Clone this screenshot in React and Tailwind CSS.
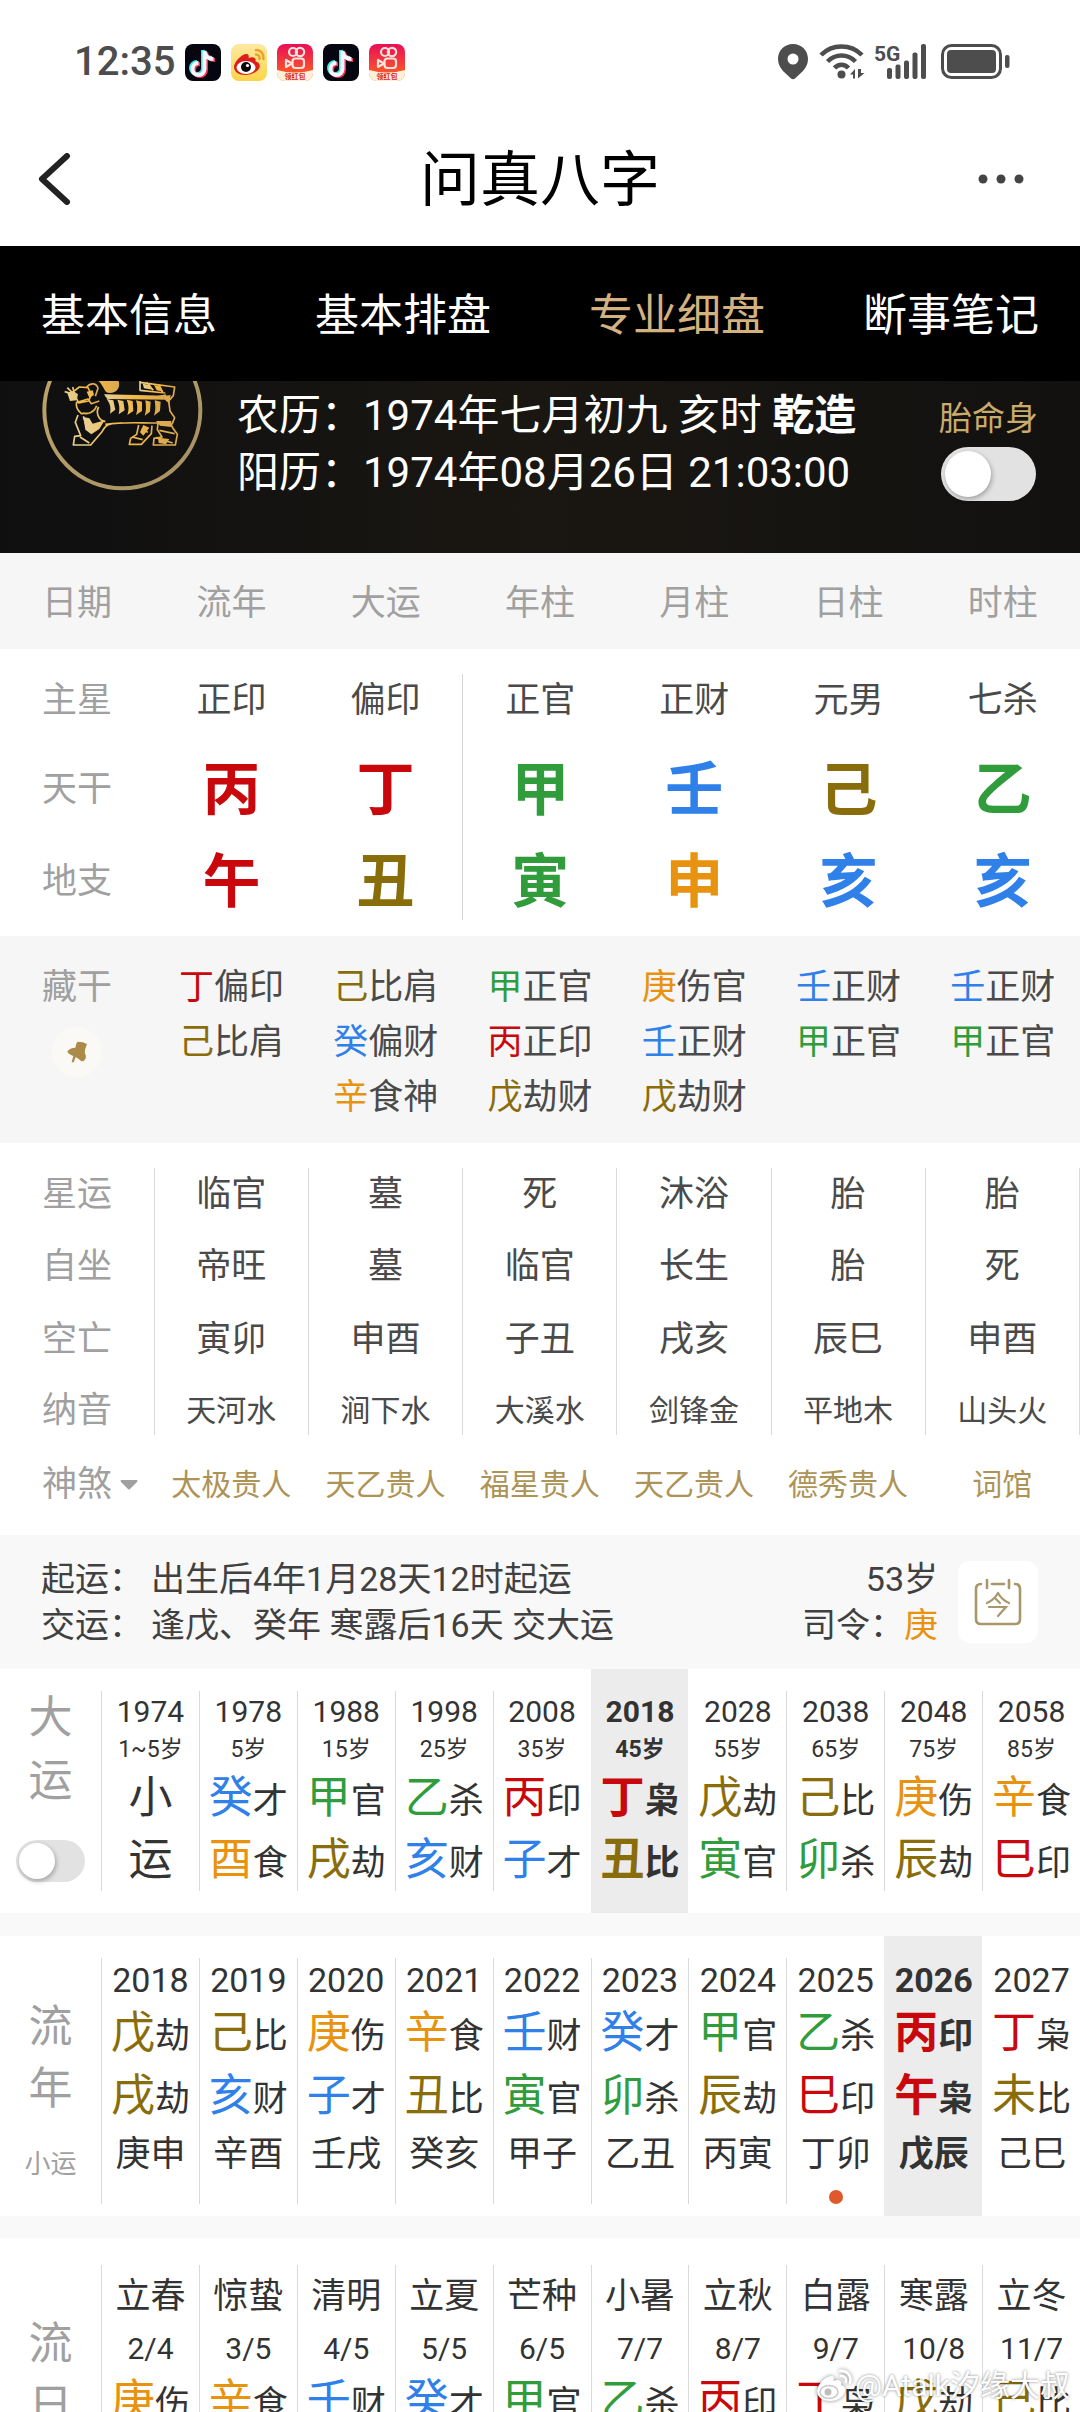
import { useState } from "react";
import clsx from "clsx";

const RED = "text-[#c8080c]";
const BROWN = "text-[#8a6d0b]";
const GREEN = "text-[#319c3c]";
const BLUE = "text-[#2f80e8]";
const ORANGE = "text-[#e8930f]";

// five-element colour of every stem and branch
const elementColor = {
  甲: GREEN, 乙: GREEN, 寅: GREEN, 卯: GREEN,
  丙: RED, 丁: RED, 巳: RED, 午: RED,
  戊: BROWN, 己: BROWN, 辰: BROWN, 戌: BROWN, 丑: BROWN, 未: BROWN,
  庚: ORANGE, 辛: ORANGE, 申: ORANGE, 酉: ORANGE,
  壬: BLUE, 癸: BLUE, 子: BLUE, 亥: BLUE,
};

const tabs = ["基本信息", "基本排盘", "专业细盘", "断事笔记"];

const hiddenStems = [
  ["丁偏印", "己比肩"],
  ["己比肩", "癸偏财", "辛食神"],
  ["甲正官", "丙正印", "戊劫财"],
  ["庚伤官", "壬正财", "戊劫财"],
  ["壬正财", "甲正官"],
  ["壬正财", "甲正官"],
];

const fortunes = [
  { label: "星运", values: ["临官", "墓", "死", "沐浴", "胎", "胎"], height: "h-[61px] pb-2" },
  { label: "自坐", values: ["帝旺", "墓", "临官", "长生", "胎", "死"], height: "h-[73px] pt-0.5" },
  { label: "空亡", values: ["寅卯", "申酉", "子丑", "戌亥", "辰巳", "申酉"], height: "h-[73px] pt-0.5" },
  { label: "纳音", values: ["天河水", "涧下水", "大溪水", "剑锋金", "平地木", "山头火"], height: "h-[60px] pt-3", small: true },
];

const spirits = ["太极贵人", "天乙贵人", "福星贵人", "天乙贵人", "德秀贵人", "词馆"];

const decades = [
  { year: "1974", age: "1~5岁", plain: ["小", "运"] },
  { year: "1978", age: "5岁", rows: ["癸才", "酉食"] },
  { year: "1988", age: "15岁", rows: ["甲官", "戌劫"] },
  { year: "1998", age: "25岁", rows: ["乙杀", "亥财"] },
  { year: "2008", age: "35岁", rows: ["丙印", "子才"] },
  { year: "2018", age: "45岁", rows: ["丁枭", "丑比"] },
  { year: "2028", age: "55岁", rows: ["戊劫", "寅官"] },
  { year: "2038", age: "65岁", rows: ["己比", "卯杀"] },
  { year: "2048", age: "75岁", rows: ["庚伤", "辰劫"] },
  { year: "2058", age: "85岁", rows: ["辛食", "巳印"] },
];

const years = [
  { year: "2018", rows: ["戊劫", "戌劫"], minor: "庚申" },
  { year: "2019", rows: ["己比", "亥财"], minor: "辛酉" },
  { year: "2020", rows: ["庚伤", "子才"], minor: "壬戌" },
  { year: "2021", rows: ["辛食", "丑比"], minor: "癸亥" },
  { year: "2022", rows: ["壬财", "寅官"], minor: "甲子" },
  { year: "2023", rows: ["癸才", "卯杀"], minor: "乙丑" },
  { year: "2024", rows: ["甲官", "辰劫"], minor: "丙寅" },
  { year: "2025", rows: ["乙杀", "巳印"], minor: "丁卯", now: true },
  { year: "2026", rows: ["丙印", "午枭"], minor: "戊辰" },
  { year: "2027", rows: ["丁枭", "未比"], minor: "己巳" },
];

const terms = [
  { name: "立春", date: "2/4", row: "庚伤" },
  { name: "惊蛰", date: "3/5", row: "辛食" },
  { name: "清明", date: "4/5", row: "壬财" },
  { name: "立夏", date: "5/5", row: "癸才" },
  { name: "芒种", date: "6/5", row: "甲官" },
  { name: "小暑", date: "7/7", row: "乙杀" },
  { name: "立秋", date: "8/7", row: "丙印" },
  { name: "白露", date: "9/7", row: "丁枭" },
  { name: "寒露", date: "10/8", row: "戊劫" },
  { name: "立冬", date: "11/7", row: "己比" },
];

function TiktokIcon() {
  const note = "M20 5v18a6 6 0 1 1-6-6M20 5c.5 5 4 8 9 8";
  return (
    <svg viewBox="0 0 36 37" className="w-9 h-[37px]" aria-label="抖音">
      <rect width="36" height="37" rx="8" fill="#05060f" />
      <g fill="none" strokeWidth="4">
        <path d={note} stroke="#3be5e6" transform="translate(-2 1)" />
        <path d={note} stroke="#f4325c" transform="translate(1 3)" />
        <path d={note} stroke="#f4f6fa" transform="translate(-.5 2)" />
      </g>
    </svg>
  );
}

function WeiboIcon() {
  return (
    <svg viewBox="0 0 36 37" className="w-9 h-[37px]" aria-label="微博">
      <defs>
        <linearGradient id="weiboBg" x1="0" y1="0" x2="0" y2="1">
          <stop offset="0" stopColor="#fde9a2" />
          <stop offset="1" stopColor="#fbd548" />
        </linearGradient>
      </defs>
      <rect width="36" height="37" rx="8" fill="url(#weiboBg)" />
      <path
        d="M3 23c0-6 9-14 13-13 2 .5 2 3 1.500 4 4-1.500 8-1 7 3.500 3 .5 5 3 4 6C27 28 20 31 14 31 8 31 3 28 3 23z"
        fill="#dd1f1b"
      />
      <ellipse cx="15" cy="23.500" rx="9.500" ry="6.500" fill="#fff" />
      <circle cx="15" cy="23" r="5" fill="#0a0a0a" />
      <circle cx="16.500" cy="21.500" r="1.600" fill="#fff" />
      <path
        d="M25 6c5 0 8 4 7.500 9M25 10.500c2.500 0 4 2 3.500 4.500"
        fill="none"
        stroke="#e9a32b"
        strokeWidth="2.400"
        strokeLinecap="round"
      />
    </svg>
  );
}

function KuaishouIcon() {
  return (
    <svg viewBox="0 0 36 37" className="w-9 h-[37px]" aria-label="快手">
      <defs>
        <linearGradient id="ksBg" x1="0" y1="0" x2="0" y2="1">
          <stop offset="0" stopColor="#e80f57" />
          <stop offset="1" stopColor="#ff6a1c" />
        </linearGradient>
        <clipPath id="ksClip">
          <rect width="36" height="37" rx="8" />
        </clipPath>
      </defs>
      <g clipPath="url(#ksClip)">
        <rect width="36" height="37" fill="url(#ksBg)" />
        <path d="M0 26q18 5 36 0v11H0z" fill="#fff0d8" />
        <g fill="none" stroke="#ffe3da" strokeWidth="2.200">
          <circle cx="16" cy="8" r="4" />
          <circle cx="23" cy="8" r="4.200" />
          <rect x="15.500" y="14.500" width="11.500" height="9.500" rx="3" />
          <path d="M15 19.500l-6-3.500v7z" strokeLinejoin="round" />
        </g>
      </g>
      <text x="18" y="35" textAnchor="middle" fontSize="7" fontWeight="700" fill="#d9261c">
        领红包
      </text>
    </svg>
  );
}

function StatusIcons() {
  return (
    <svg viewBox="0 0 232 36" className="w-[232px] h-9 overflow-visible" fill="#4d4d4d" aria-label="5G 信号，电量满">
      <path d="M15 0C6.500 0 0 6.500 0 15c0 5 2 8 5 12l8 7.500q2 1.500 4 0l8-7.500c3-4 5-7 5-12C30 6.500 23.500 0 15 0zm0 9.500a5.500 5.500 0 1 1 0 11 5.500 5.500 0 0 1 0-11z" fillRule="evenodd" />
      <g fill="none" stroke="#4d4d4d" strokeWidth="4.500">
        <path d="M43 11c11-11.500 30-11.500 41 0" />
        <path d="M49.500 17.500c8-8 20-8 28 0" />
        <path d="M56.500 24c4-4.500 10-4.500 14 0" />
      </g>
      <circle cx="63.500" cy="30.500" r="4" />
      <path d="M77 34.500V25l-5 5.500h3v4zM80 25v9.500l6.500-5.500H83v-4z" />
      <text x="96" y="17" fontSize="21" fontWeight="700">
        5G
      </text>
      <rect x="109" y="24" width="5" height="11" rx="2" />
      <rect x="117.500" y="20.500" width="5" height="14.500" rx="2" />
      <rect x="126" y="16.500" width="5" height="18.500" rx="2" />
      <rect x="134.500" y="8.500" width="5" height="26.500" rx="2" />
      <rect x="143" y="0" width="5" height="35" rx="2" />
      <rect x="164.500" y="1.500" width="58" height="32" rx="9" fill="none" stroke="#4d4d4d" strokeWidth="3" />
      <rect x="169" y="6" width="49" height="23" rx="4" />
      <rect x="227" y="11" width="4.500" height="13" rx="2" />
    </svg>
  );
}

function TigerBadge() {
  return (
    <svg viewBox="33 18 486 330" className="w-[162px] h-[110px] shrink-0" aria-label="生肖虎">
      <defs>
        <linearGradient id="ring" x1="0" y1="0" x2="1" y2="1">
          <stop offset="0" stopColor="#c0a76a" />
          <stop offset="1" stopColor="#a39064" />
        </linearGradient>
        <linearGradient id="tiger" x1="0" y1="0" x2="1" y2="0">
          <stop offset="0" stopColor="#e6cf94" />
          <stop offset=".5" stopColor="#f3b844" />
          <stop offset="1" stopColor="#d9a850" />
        </linearGradient>
      </defs>
      <circle cx="277" cy="106" r="234" fill="none" stroke="url(#ring)" strokeWidth="12" />
      <g fill="none" stroke="url(#tiger)" strokeWidth="5" strokeLinejoin="round">
        {/* whiskers and muzzle */}
        <path d="M130 50l18-14 26 2 10 20-8 20-30 6zM140 80c-4 16 2 26 14 36l24-2M170 36c12-14 30-12 34 4l-8 24M112 38l14 14M104 50l20 6M128 36l4 14M142 82l32-10 10 14 24-8M200 92c-6 18-24 28-42 22" />
        {/* back, belly and legs */}
        <path d="M226 62l154 4 28-6M206 96c-8 14-4 40 20 44M226 148c50-8 100-4 158-4M144 120l-8 22 16 40-18 2-4 26h52l34-40c8-14 12-20 30-24l30-2M326 150l-6 28-18 12-4 18h36l30-32 2-24M384 142l-2 22 14 22-24 4-2 20h66l6-32-14-20-10-20" />
        {/* tail */}
        <path d="M330 18v28l76 8M330 22l104 14-4 26-14 16 4 30 14 20-8 20M350 22l20 24M384 28l14 24" />
        <path d="M160 124l12 40M150 186l28 18M306 186l32 8M334 164l20 8M378 188l50 16M388 166l46 10" />
      </g>
      <g fill="url(#tiger)">
        <path d="M112 54l18-6 14 10-4 18-20 2zM170 50l18-4 4 14-14 8zM206 18h60c6 20-6 36-26 36-18 0-14-14-34-36z" />
        <path d="M160 126l18 4 10 16 36-10-16 26-24 16-18-14zM378 138h46v18l-34-4zM340 150l18 8-18 24-10-10zM384 188l34 4-10 16-22-4z" />
        <path d="M222 58l190 4v12l-180-2z" />
        <path d="M230 72l20 4 6 28-16 12c4-18 0-30-10-44zM262 74l18 4 4 28-18 12c4-18 2-30-4-44zM290 74l18 4 2 30-18 12c6-18 4-30-2-46zM318 76l18 4v28l-18 12c6-18 4-30 0-44zM346 76l16 4-2 30-16 12c6-18 4-30 2-46zM374 76l18 4-2 28-18 14c6-18 4-30 2-46z" />
        <path d="M338 26l22 4 8 14-26-4zM372 30l20 4 8 16-20-4zM408 62l14-2-4 26-12-10z" />
      </g>
    </svg>
  );
}

function Toggle({ label, small }) {
  const [on, setOn] = useState(false);
  return (
    <button
      role="switch"
      aria-checked={on}
      aria-label={label}
      onClick={() => setOn(!on)}
      className={clsx(
        "flex items-center rounded-full bg-[#e2e2e2]",
        small ? "w-[69px] h-[42px] px-[3px]" : "w-[95px] h-[54px] px-1",
        on && "justify-end"
      )}
    >
      <span
        className={clsx(
          "rounded-full bg-white shadow-[1px_2px_5px_rgba(0,0,0,0.3)]",
          small ? "size-9" : "size-[46px]"
        )}
      />
    </button>
  );
}

function Pair({ text, line }) {
  return (
    <span className={clsx("block whitespace-nowrap text-[44px]", line)}>
      <span className={elementColor[text[0]]}>{text[0]}</span>
      <span className="text-[35px] leading-none">{text[1]}</span>
    </span>
  );
}

function LabelCell({ children, className }) {
  return (
    <th scope="row" className={clsx("font-normal text-[#a0a0a0] pl-[42px] text-left whitespace-nowrap", className)}>
      {children}
    </th>
  );
}

// One scrollable strip: a label on the left and ten selectable columns
function Strip({ label, items, selected, onSelect, bodyClass, renderItem }) {
  return (
    <section className="flex bg-white text-[#333]">
      <div className="w-[101px] shrink-0 flex flex-col items-center text-[#a0a0a0] text-[44px]">{label}</div>
      <div className="flex-1 grid grid-cols-10">
        {items.map((item, i) => (
          <button
            key={i}
            onClick={() => onSelect(i)}
            className={clsx("pt-[22px]", bodyClass, i === selected && "bg-[#ececed] font-bold")}
          >
            <span
              className={clsx(
                "block border-l",
                i === selected || (selected >= 0 && i === selected + 1) ? "border-transparent" : "border-[#d9d9d9]"
              )}
            >
              {renderItem(item)}
            </span>
          </button>
        ))}
      </div>
    </section>
  );
}

export default function App() {
  const [tab, setTab] = useState(2);
  const [decade, setDecade] = useState(5);
  const [year, setYear] = useState(8);
  const [term, setTerm] = useState(-1);

  return (
    <div className="relative h-screen overflow-hidden bg-white font-[Roboto,'Noto_Sans_CJK_SC',sans-serif] text-[#4a4a4a]">
      <div className="h-[124px] flex items-center justify-between pl-[74px] pr-[70px]">
        <div className="flex items-center gap-[10px]">
          <span className="text-[40px] font-medium text-[#4d4d4d] leading-none">12:35</span>
          <TiktokIcon />
          <WeiboIcon />
          <KuaishouIcon />
          <TiktokIcon />
          <KuaishouIcon />
        </div>
        <StatusIcons />
      </div>

      <header className="h-[122px] flex items-center justify-between pb-3 pl-[38px] pr-14">
        <button aria-label="返回" className="w-16">
          <svg viewBox="0 0 34 52" className="w-[34px] h-[52px]">
            <path d="M29 3L4 26l25 23" fill="none" stroke="#222" strokeWidth="6" strokeLinecap="round" strokeLinejoin="round" />
          </svg>
        </button>
        <h1 className="pt-1 text-[60px] leading-none text-black">问真八字</h1>
        <button aria-label="更多">
          <svg viewBox="0 0 46 10" className="w-[46px] h-[10px]" fill="#444">
            <circle cx="5" cy="5" r="4.500" />
            <circle cx="23" cy="5" r="4.500" />
            <circle cx="41" cy="5" r="4.500" />
          </svg>
        </button>
      </header>

      <nav className="h-[135px] bg-black flex items-center justify-between pt-1 px-[41px]">
        {tabs.map((name, i) => (
          <button
            key={name}
            onClick={() => setTab(i)}
            className={clsx("text-[44px]", tab === i ? "text-[#d3b280]" : "text-white")}
          >
            {name}
          </button>
        ))}
      </nav>

      <section className="h-[172px] flex items-start pl-[41px] pr-[42px] bg-linear-to-r from-[#0f0f10] via-[#1a1712] to-[#121110]">
        <TigerBadge />
        <div className="pl-[34px] pt-[6px] flex-1 text-[42px] leading-[57px] text-white whitespace-nowrap">
          <p>
            农历：1974年七月初九 亥时 <b>乾造</b>
          </p>
          <p>阳历：1974年08月26日 21:03:00</p>
        </div>
        <div className="flex flex-col items-center pt-[14px] gap-1">
          <span className="text-[33px] leading-[48px] text-[#c9ab6c]">胎命身</span>
          <Toggle label="胎命身" />
        </div>
      </section>

      <main>
        <table className="w-full table-fixed text-[35px] leading-[50px] text-center">
          <thead className="bg-[#f6f6f6] text-[#a0a0a0]">
            <tr className="h-24">
              <th scope="col" className="pt-1.5 font-normal text-left pl-[42px]">日期</th>
              {["流年", "大运", "年柱", "月柱", "日柱", "时柱"].map((name) => (
                <th key={name} scope="col" className="pt-1.5 font-normal">{name}</th>
              ))}
            </tr>
          </thead>
        </table>

        <div className="pt-[25px] pb-4">
          <table className="w-full table-fixed text-[35px] leading-[50px] text-center">
            <tbody>
              <tr className="h-[54px]">
                <LabelCell>主星</LabelCell>
                {["正印", "偏印", "正官", "正财", "元男", "七杀"].map((name, i) => (
                  <td key={i} className={clsx(i === 2 && "border-l border-[#d4d4d4]")}>{name}</td>
                ))}
              </tr>
              <tr className="h-[124px]">
                <LabelCell>天干</LabelCell>
                {[..."丙丁甲壬己乙"].map((char, i) => (
                  <td key={i} className={clsx("text-[58px] font-bold", elementColor[char], i === 2 && "border-l border-l-[#d4d4d4]")}>
                    {char}
                  </td>
                ))}
              </tr>
              <tr className="h-[68px]">
                <LabelCell className="pb-2">地支</LabelCell>
                {[..."午丑寅申亥亥"].map((char, i) => (
                  <td key={i} className={clsx("pb-2 text-[58px] font-bold", elementColor[char], i === 2 && "border-l border-l-[#d4d4d4]")}>
                    {char}
                  </td>
                ))}
              </tr>
            </tbody>
          </table>
        </div>

        <div className="bg-[#f6f6f6] pt-6 pb-[18px]">
          <table className="w-full table-fixed text-[35px] leading-[55px] text-center">
            <tbody>
              <tr className="align-top">
                <LabelCell>
                  藏干
                  <button aria-label="固定" className="flex items-center justify-center mt-3 ml-[10px] size-[50px] rounded-full bg-[#fbf9f5]">
                    <svg viewBox="0 0 60 66" className="w-5 h-[22px]">
                      <path d="M32 2c10 0 22 2 28 8-4 10-8 18-6 28 4 6 4 14-2 20-4 4-8 4-14-2l-12-8-5 14q-3 4-7 1l5-18C12 42 4 38 1 32c4-8 14-12 24-12 2-6 2-14 7-18z" fill="#ab8b48" />
                    </svg>
                  </button>
                </LabelCell>
                {hiddenStems.map((stems, i) => (
                  <td key={i} className="whitespace-nowrap">
                    {stems.map((stem) => (
                      <p key={stem}>
                        <span className={elementColor[stem[0]]}>{stem[0]}</span>
                        {stem.slice(1)}
                      </p>
                    ))}
                  </td>
                ))}
              </tr>
            </tbody>
          </table>
        </div>

        <div className="pt-[25px]">
          <table className="w-full table-fixed text-[35px] leading-[48px] text-center">
            <tbody>
              {fortunes.map(({ label, values, height, small }) => (
                <tr key={label}>
                  <LabelCell className={height}>{label}</LabelCell>
                  {values.map((value, i) => (
                    <td key={i} className={clsx("border-l border-[#d9d9d9] last:border-r", height, small && "text-[30px]")}>
                      {value}
                    </td>
                  ))}
                </tr>
              ))}
              <tr className="h-[100px]">
                <LabelCell>
                  <button className="flex items-center gap-2">
                    神煞
                    <svg viewBox="0 0 18 10" className="w-[18px] h-[10px] shrink-0">
                      <path d="M1 0h16q1 1 0 2l-7 7q-1 1-2 0L1 2q-1-1 0-2z" fill="#a0a0a0" />
                    </svg>
                  </button>
                </LabelCell>
                {spirits.map((name, i) => (
                  <td key={i} className="text-[30px] text-[#ae9356] whitespace-nowrap">{name}</td>
                ))}
              </tr>
            </tbody>
          </table>
        </div>

        <section className="h-[134px] bg-[#f8f8f8] flex items-center pl-[41px] pr-[42px] text-[34px] leading-[46px] text-[#404040] whitespace-nowrap">
          <dl className="grid grid-cols-[auto_1fr] gap-x-2 flex-1">
            <dt>起运：</dt>
            <dd>出生后4年1月28天12时起运</dd>
            <dt>交运：</dt>
            <dd>逢戊、癸年 寒露后16天 交大运</dd>
          </dl>
          <div className="text-right">
            <p>53岁</p>
            <p>
              司令：<span className={ORANGE}>庚</span>
            </p>
          </div>
          <button aria-label="今天" className="ml-5 w-20 h-[82px] rounded-xl bg-white flex items-center justify-center">
            <svg viewBox="0 0 48 48" className="size-12" fill="none" stroke="#a8976a" strokeWidth="2.600" strokeLinecap="round">
              <path d="M7 6q-5 0-5 5v30q0 5 5 5h34q5 0 5-5V11q0-5-5-5M18 6h12M13 2v8M35 2v8" />
              <path d="M24 15q-4 7-11 10M24 15q4 7 11 10M22 21l4 4M15 29h17l-8 9" strokeWidth="2.200" />
            </svg>
          </button>
        </section>

        <Strip
          label={
            <>
              <span className="mt-[18px] leading-[63px]">大</span>
              <span className="leading-[63px] mb-[27px]">运</span>
              <Toggle label="大运" small />
            </>
          }
          items={decades}
          selected={decade}
          onSelect={setDecade}
          bodyClass="pb-[22px]"
          renderItem={(item) => (
            <>
              <span className="block text-[30px] leading-[42px]">{item.year}</span>
              <span className="block text-[23px] leading-[34px]">{item.age}</span>
              {item.plain
                ? item.plain.map((char) => (
                    <span key={char} className="block text-[44px] leading-[62px]">{char}</span>
                  ))
                : item.rows.map((row) => <Pair key={row} text={row} line="leading-[62px]" />)}
            </>
          )}
        />

        <div className="h-[23px] bg-[#f9f9f9]" />

        <Strip
          label={
            <>
              <span className="mt-[60px] leading-[62px]">流</span>
              <span className="leading-[62px]">年</span>
              <span className="mt-6 text-[26px] leading-[40px]">小运</span>
            </>
          }
          items={years}
          selected={year}
          onSelect={setYear}
          bodyClass="pb-3"
          renderItem={(item) => (
            <>
              <span className="block text-[34px] leading-[44px]">{item.year}</span>
              {item.rows.map((row) => (
                <Pair key={row} text={row} line="leading-[63px]" />
              ))}
              <span className="block text-[35px] leading-[54px]">{item.minor}</span>
              <span className="h-[22px] flex items-end justify-center">
                {item.now && <span className="size-[14px] rounded-full bg-[#e0592b]" />}
              </span>
            </>
          )}
        />

        <div className="h-[22px] bg-[#f9f9f9]" />

        <Strip
          label={
            <>
              <span className="mt-[75px] leading-[62px]">流</span>
              <span className="leading-[62px]">日</span>
            </>
          }
          items={terms}
          selected={term}
          onSelect={setTerm}
          renderItem={(item) => (
            <>
              <span className="block text-[35px] leading-[64px]">{item.name}</span>
              <span className="block text-[30px] leading-[40px]">{item.date}</span>
              <Pair text={item.row} line="leading-[64px]" />
            </>
          )}
        />
      </main>

      <div className="absolute right-[10px] bottom-1 flex items-center text-[30px] leading-[44px] text-white [text-shadow:0_0_3px_rgba(0,0,0,0.5)]">
        <svg viewBox="0 0 40 36" className="w-10 h-9 drop-shadow-[0_0_2px_rgba(0,0,0,0.45)]">
          <path d="M2 23C2 16 12 7 17 8c3 1 2 4 1 5 5-2 9-1 8 4 4 1 5 4 4 7-2 6-9 9-15 9S2 30 2 23z" fill="#fff" />
          <ellipse cx="14" cy="24" rx="9" ry="6.500" fill="none" stroke="#c9c9c9" strokeWidth="1.500" />
          <circle cx="13" cy="24" r="3.500" fill="#bdbdbd" />
          <path d="M25 3c7-1 12 5 10 12M26 8c4 0 6 3 5 6" fill="none" stroke="#fff" strokeWidth="2.500" strokeLinecap="round" />
        </svg>
        <span>@Atalk汐缘大叔</span>
      </div>
    </div>
  );
}
